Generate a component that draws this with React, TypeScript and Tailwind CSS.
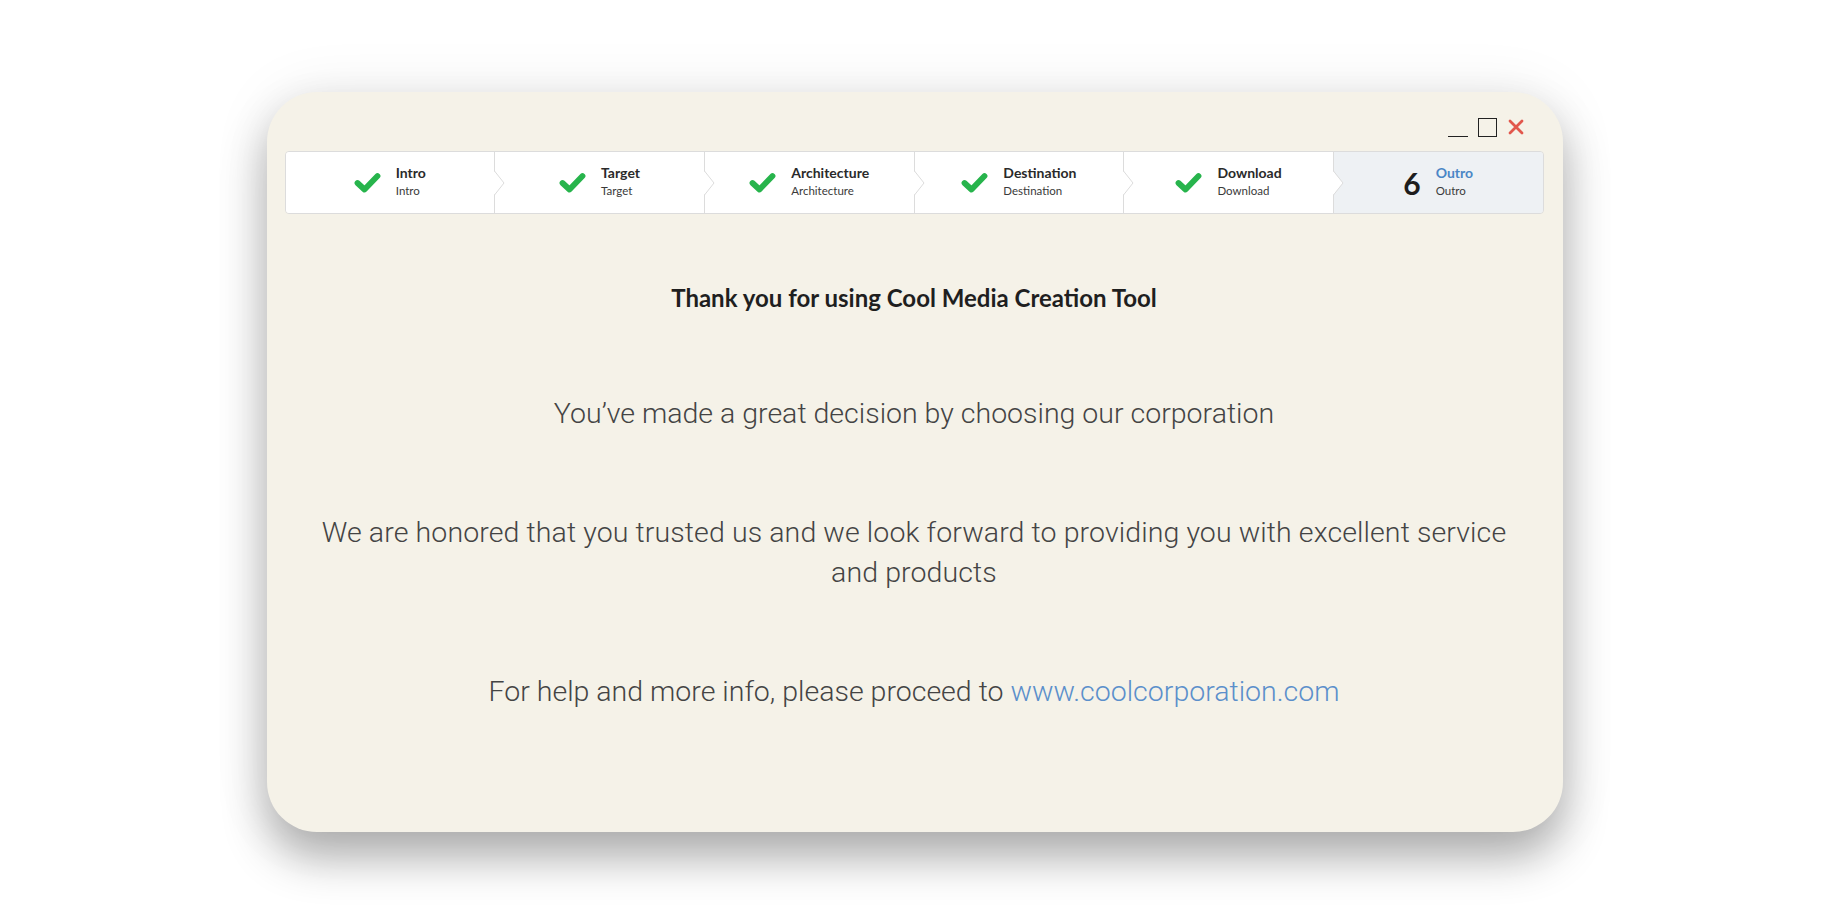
import React from "react";

type Step = { label: string; done: boolean; num?: number };

const steps: Step[] = [
  { label: "Intro", done: true },
  { label: "Target", done: true },
  { label: "Architecture", done: true },
  { label: "Destination", done: true },
  { label: "Download", done: true },
  { label: "Outro", done: false, num: 6 },
];

function Check() {
  return (
    <svg width="27" height="21" viewBox="0 0 27 21" className="shrink-0">
      <path
        d="M3.5 11 L10.5 17.5 L23.5 4"
        fill="none"
        stroke="#27b44c"
        strokeWidth="5.8"
        strokeLinecap="round"
        strokeLinejoin="round"
      />
    </svg>
  );
}

function Chevron() {
  return (
    <svg
      width="11"
      height="24"
      viewBox="0 0 11 24"
      className="absolute left-full top-1/2 z-10 -translate-y-1/2"
    >
      <polygon points="0,0 10,12 0,24" fill="#ffffff" />
      <polyline points="0.5,0 10,12 0.5,24" fill="none" stroke="#dcdcdc" strokeWidth="1" />
    </svg>
  );
}

function StepItem({ step, last }: { step: Step; last: boolean }) {
  return (
    <div
      className={`relative flex flex-1 items-center justify-center gap-[15px] ${
        last ? "rounded-r-[3px] bg-[#eef1f4]" : "border-r border-[#dcdcdc] bg-white"
      } ${step.label === "Intro" ? "rounded-l-[3px]" : ""}`}
    >
      {step.done ? (
        <Check />
      ) : (
        <span className="text-[30px] leading-none font-bold text-[#1d1d1d]">{step.num}</span>
      )}
      <div className="mb-[3px] flex flex-col leading-none">
        <span
          className={`text-[14px] font-bold ${step.done ? "text-[#2a2a2a]" : "text-[#4a86c6]"}`}
        >
          {step.label}
        </span>
        <span className="mt-[5px] text-[11.5px] text-[#3a3a3a]">{step.label}</span>
      </div>
      {!last && <Chevron />}
    </div>
  );
}

export default function App() {
  return (
    <div className="flex h-screen w-full items-center justify-center bg-white font-['Lato',sans-serif]">
      <div className="flex h-[740px] w-[1296px] flex-col rounded-[50px] bg-[#f5f2e8] pl-[18px] pr-[19px] pt-[26px] shadow-[0_26px_45px_rgba(0,0,0,0.3),0_0_60px_rgba(0,0,0,0.08)]">
        {/* window controls */}
        <div className="flex h-[19px] items-end justify-end pr-[20px]">
          <div className="h-[1.5px] w-[20px] bg-[#222]" />
          <div className="ml-[10px] h-[19px] w-[19px] border-[1.5px] border-[#222]" />
          <svg width="16" height="16" viewBox="0 0 16 16" className="mb-[2px] ml-[11px]">
            <path d="M2 2 L14 14 M14 2 L2 14" stroke="#e2574c" strokeWidth="2.8" strokeLinecap="round" />
          </svg>
        </div>

        {/* stepper */}
        <div className="mt-[14px] flex h-[63px] rounded-[4px] border border-[#dcdcdc]">
          {steps.map((s, i) => (
            <StepItem key={s.label} step={s} last={i === steps.length - 1} />
          ))}
        </div>

        <div className="flex flex-col items-center text-center">
          <h1 className="mt-[69px] text-[24px] leading-[29px] font-bold text-[#1f1f1f]">
            Thank you for using Cool Media Creation Tool
          </h1>
          <div className="font-['Roboto',sans-serif] text-[28.5px] leading-[40px] font-light text-[#444]">
            <p className="mt-[82px]">You’ve made a great decision by choosing our corporation</p>
            <p className="mx-auto mt-[79px] w-[1210px] tracking-[0.1px]">
              We are honored that you trusted us and we look forward to providing you with excellent
              service and products
            </p>
            <p className="mt-[79px]">
              For help and more info, please proceed to{" "}
              <a href="#" className="text-[#5b8fcb]">
                www.coolcorporation.com
              </a>
            </p>
          </div>
        </div>
      </div>
    </div>
  );
}
